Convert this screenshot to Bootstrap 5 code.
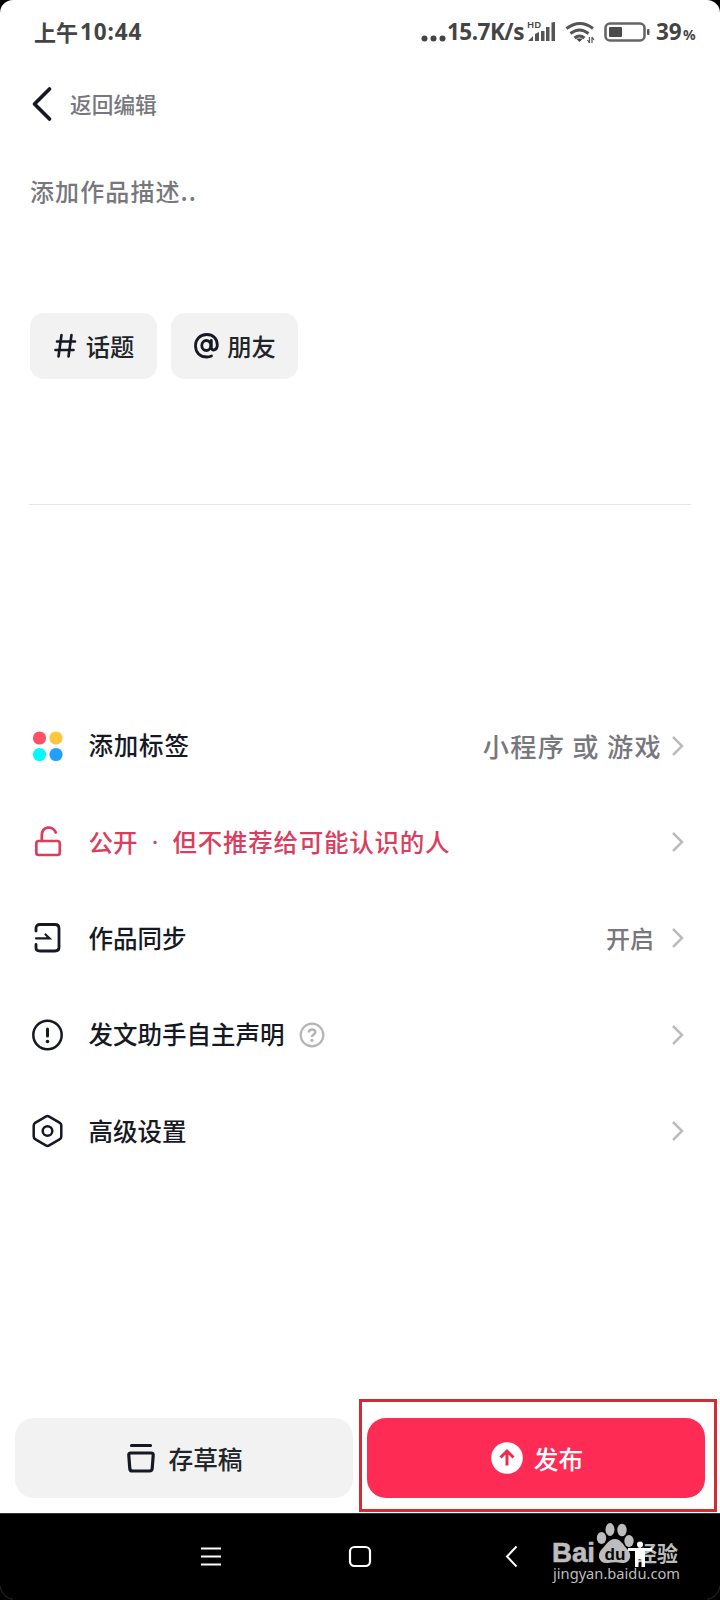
<!DOCTYPE html>
<html lang="zh-CN">
<head>
<meta charset="utf-8">
<meta name="viewport" content="width=device-width, initial-scale=1">
<title>发布</title>
<link href="https://cdn.jsdelivr.net/npm/bootstrap@5.3.0/dist/css/bootstrap.min.css" rel="stylesheet">
<style>
  html { background: #000; }
  body { background: #000; font-family: "Noto Sans CJK SC", sans-serif; line-height: 1; color: #161823; font-weight: 500; overflow: hidden; }
  svg { display: block; flex: none; overflow: visible; }
  .phone { width: 720px; height: 1600px; }
  .screen { height: 1513px; background: #fff; border-radius: 13px 13px 0 0; white-space: nowrap; }
  .status { height: 65px; padding: 0 26px 0 34px; color: #444; font-weight: 700; font-size: 22px; }
  .status .clock-cjk { padding-bottom: 4px; }
  .latin { font-family: "Noto Sans", sans-serif; font-size: 22.5px; }
  .clock { margin-left: 2px; letter-spacing: .9px; }
  .rate { width: 78px; letter-spacing: -.5px; }
  .pct { font-size: 14px; width: 11px; padding-top: 5px; letter-spacing: -1px; }
  .back-row { height: 78px; padding-left: 31px; gap: 19px; color: #77777d; font-size: 21.7px; }
  .desc { height: 95px; padding-left: 30px; color: #77777d; font-size: 24px; letter-spacing: 1.1px; }
  .chips { padding: 75px 0 0 29.5px; gap: 14px; }
  .chip { width: 127px; height: 66px; border-radius: 14px; background: #f2f2f2; font-size: 24.3px; gap: 10px; --bs-btn-padding-x: 0; border: 0; font-weight: 500; line-height: 1; padding-left: 2px; }
  .divider { margin: 125px 29px 0; height: 1px; background: #e6e6e8; }
  .options { margin-top: 193px; }
  .option { height: 96.2px; padding: 0 36px 0 31px; font-size: 24.5px; }
  .option .glyph { width: 32px; margin-right: 25.5px; }
  .value { color: #77777d; }
  .lock { color: #da3d5e; }
  .lock .latin { width: 35px; }
  .actions { padding: 0 15px; margin-top: 239px; gap: 14px; }
  .action { height: 80px; border-radius: 19px; font-size: 24.7px; font-weight: 500; border: 0; background: #f2f2f2; line-height: 1; gap: 13px; --bs-btn-padding-x: 0; --bs-btn-padding-y: 0; padding-left: 2px; }
  .action.publish { background: #fe2c55; color: #fff; gap: 11px; }
  .focus-frame { left: -8px; top: -19px; width: 358px; height: 113px; border: 3px solid #d12b35; pointer-events: none; }
  .sysnav { height: 87px; background: #000; }
  .sysnav > svg { position: absolute; left: 0; top: 0; }
  .sysnav > .wm { left: 553px; top: 8px; }
</style>
</head>
<body>
<div class="phone position-relative">
  <main class="screen d-flex flex-column">
    <header class="status d-flex align-items-center">
      <span class="clock-cjk">上午</span><span class="latin clock">10:44</span>
      <span class="ms-auto d-flex align-items-center">
        <svg width="27" height="65"><g fill="#444"><circle cx="4.500" cy="38.500" r="3"/><circle cx="13.500" cy="38.500" r="3"/><circle cx="22.500" cy="38.500" r="3"/></g></svg>
        <span class="latin rate">15.7K/s</span>
        <svg width="122" height="65" viewBox="526 0 122 65"><g fill="#555"><path d="M529 41l5-5v5zM536 34l4-2v9h-4zM542 31h3.500v10H542zM547 27h3.500v14H547zM552.500 22.500l3.500-.5v19h-3.500z"/></g>
          <text x="528" y="28" font-size="9.500" font-weight="600" fill="#444" font-family="Noto Sans">HD</text>
          <g fill="none" stroke="#555" stroke-width="3"><path d="M567.500 28.500q13.500-10 26.500 0M571.500 33.500q9-7 18 0M575.500 38q5-4 10 0"/><rect x="606.500" y="23.500" width="39" height="17" rx="4.500" stroke="#666" stroke-width="2.600"/></g>
          <path d="M577 38.500h7l-3.500 3.500z" fill="#444"/><path d="M590.500 37v6M593 43v-6M588.500 40l2 3M595 40l-2-3" stroke="#555" stroke-width="1.200" fill="none"/>
          <rect x="610" y="27" width="13" height="10" rx="1" fill="#4c4c4c"/><rect x="648" y="29" width="2.500" height="6" rx="1" fill="#555"/></svg>
        <span class="latin" style="margin-left:9px;width:27px">39</span><span class="latin pct">%</span>
      </span>
    </header>

    <div class="back-row d-flex align-items-center">
      <svg width="20" height="34" fill="none" stroke="#161823" stroke-width="3.700" stroke-linecap="round" stroke-linejoin="round"><path d="M18.500 2L3.500 17l15 15"/></svg>
      <span>返回编辑</span>
    </div>
    <div class="desc d-flex align-items-center">添加作品描述..</div>

    <div class="chips d-flex">
      <button class="btn chip d-flex align-items-center justify-content-center">
        <svg width="22" height="24" fill="none" stroke="#161823" stroke-width="2.600" stroke-linecap="round"><path d="M7.500 1L4.500 22.500M17.500 1l-3 21.500M3 7.500h18M1.500 16h18"/></svg><span>话题</span>
      </button>
      <button class="btn chip d-flex align-items-center justify-content-center" style="gap:8px">
        <svg width="25" height="26" fill="none" stroke="#161823" stroke-width="2.800" stroke-linecap="round"><ellipse cx="12.300" cy="12.500" rx="4.500" ry="5"/><path d="M17.300 7.500v7c0 3.800 6 3.500 6-2.500 0-6.500-4.500-10.500-10.500-10.500C6 1.500 1.500 6.500 1.500 12.700 1.500 19.500 6 24 13 24q2.500 0 4.500-1"/></svg><span>朋友</span>
      </button>
    </div>
    <div class="divider"></div>

    <section class="options">
      <div class="option d-flex align-items-center">
        <svg class="glyph" width="32" height="32"><circle cx="8.500" cy="8" r="6.600" fill="#fb5066"/><circle cx="25" cy="8" r="6.600" fill="#ffc53d"/><circle cx="8.500" cy="24.500" r="6.600" fill="#00fbff"/><circle cx="25" cy="24.500" r="6.600" fill="#20a0ff"/></svg>
        <span style="letter-spacing:.8px;padding-bottom:2px">添加标签</span>
        <span class="value ms-auto" style="font-size:26.2px;letter-spacing:1.3px;margin-right:10px;padding-top:1px">小程序 或 游戏</span>
        <svg width="12" height="20" fill="none" stroke="#bcbcbf" stroke-width="2.500"><path d="M1 1l9 9-9 9"/></svg>
      </div>
      <div class="option lock d-flex align-items-center">
        <svg class="glyph" width="32" height="32" fill="none" stroke="currentColor" stroke-width="2.700" stroke-linecap="round"><rect x="5.300" y="15" width="23.500" height="14" rx="2.500"/><path d="M10.800 15V9.500c0-10 11.500-10 14-3"/></svg>
        <span>公开</span><span class="latin text-center">·</span><span style="letter-spacing:.75px">但不推荐给可能认识的人</span>
        <svg class="ms-auto" width="12" height="20" fill="none" stroke="#bcbcbf" stroke-width="2.500"><path d="M1 1l9 9-9 9"/></svg>
      </div>
      <div class="option d-flex align-items-center">
        <svg class="glyph" width="32" height="32" fill="none" stroke="#161823" stroke-width="2.800" stroke-linecap="round"><path d="M5 9V6.500q0-4 4-4h15q4 0 4 4v19q0 3.500-4 3.500H9q-4 0-4-3.500V22.500"/><path d="M5 16.300h13.500L14.500 12.500" stroke-width="2.200"/></svg>
        <span>作品同步</span><span class="value ms-auto" style="font-size:24px;margin-right:18px">开启</span>
        <svg width="12" height="20" fill="none" stroke="#bcbcbf" stroke-width="2.500"><path d="M1 1l9 9-9 9"/></svg>
      </div>
      <div class="option d-flex align-items-center">
        <svg class="glyph" width="32" height="32" fill="none" stroke="#161823" stroke-width="2.500" stroke-linecap="round"><circle cx="16.500" cy="16" r="14.200"/><path d="M16.500 10v7" stroke-width="3"/><circle cx="16.500" cy="22.500" r="1.800" fill="#161823" stroke="none"/></svg>
        <span>发文助手自主声明</span>
        <svg style="margin-left:14px" width="26" height="26" fill="none" stroke="#b5b5b8" stroke-width="2.200"><circle cx="13" cy="13" r="11.300"/><path d="M9.800 10.500c.3-4.200 6.700-3.800 6.500-.3-.1 2.300-3.300 2.300-3.300 4.800" stroke-width="2.600"/><circle cx="13" cy="18.300" r="1.600" fill="#b5b5b8" stroke="none"/></svg>
        <svg class="ms-auto" width="12" height="20" fill="none" stroke="#bcbcbf" stroke-width="2.500"><path d="M1 1l9 9-9 9"/></svg>
      </div>
      <div class="option d-flex align-items-center">
        <svg class="glyph" width="32" height="32" fill="none" stroke="#161823" stroke-width="2.500" stroke-linejoin="round"><path d="M14.800 1.600q1.700-1 3.400 0l10.300 6q1.800 1 1.800 3v10.800q0 2-1.800 3l-10.300 6q-1.700 1-3.400 0l-10.300-6q-1.800-1-1.800-3V10.600q0-2 1.800-3z"/><circle cx="16.500" cy="16" r="4.800"/></svg>
        <span>高级设置</span>
        <svg class="ms-auto" width="12" height="20" fill="none" stroke="#bcbcbf" stroke-width="2.500"><path d="M1 1l9 9-9 9"/></svg>
      </div>
    </section>

    <div class="actions d-flex">
      <button class="btn action flex-fill w-50 d-flex align-items-center justify-content-center">
        <svg width="28" height="30" fill="none" stroke="#161823" stroke-width="3.200" stroke-linecap="round" stroke-linejoin="round"><path d="M4.500 2.500h19M4 10h20q2.500 0 2.200 2.500l-1 13q-.2 2.500-2.700 2.500h-17Q3 28 2.800 25.500l-1-13Q1.500 10 4 10z"/></svg>
        <span>存草稿</span>
      </button>
      <div class="position-relative flex-fill w-50">
        <button class="btn action publish w-100 d-flex align-items-center justify-content-center">
          <svg width="32" height="32"><circle cx="16" cy="16" r="15.800" fill="#fff"/><path d="M16 23.500V9.500M9.500 15.500L16 9l6.500 6.500" fill="none" stroke="#e92c50" stroke-width="3"/></svg>
          <span>发布</span>
        </button>
        <div class="focus-frame position-absolute"></div>
      </div>
    </div>
  </main>

  <nav class="sysnav position-relative">
    <svg width="720" height="87" viewBox="0 1513 720 87" fill="none" stroke="#fff">
      <path d="M0 1513.500h720" stroke="#333"/>
      <path d="M201 1548.500h20M201 1556.500h20M201 1564.500h20" stroke-width="2"/>
      <rect x="350" y="1547" width="20" height="19" rx="4.500" stroke-width="2.200"/>
      <path d="M516.500 1546.500l-9.500 10 9.500 10" stroke-width="2"/>
      <path d="M0 1586q2 11 13 13.500M720 1586q-2 11-13 13.500" stroke="#292929"/>
    </svg>
    <svg class="wm" viewBox="553 1521 130 75" width="130" height="75">
      <g fill="#bdbdbd">
        <text x="552" y="1562" font-family="Liberation Sans" font-weight="700" font-size="28" textLength="43" lengthAdjust="spacingAndGlyphs" stroke="#bdbdbd" stroke-width=".6">Bai</text>
        <ellipse cx="601.500" cy="1538" rx="4.700" ry="6"/><ellipse cx="610" cy="1529.500" rx="4.500" ry="6.500"/><ellipse cx="622" cy="1530" rx="4.700" ry="6.300"/><ellipse cx="629" cy="1541" rx="4.700" ry="6"/>
        <path d="M615 1539c6 0 8 6 13 11 5 6 1 14-6 13-5-1-9-1-14 0-9 1-12-8-6-14 4-4 7-10 13-10z"/>
        <text x="636" y="1561" font-family="Noto Sans CJK SC" font-weight="700" font-size="21" textLength="42">经验</text>
        <text x="553" y="1579" font-family="Noto Sans" font-weight="400" font-size="15" textLength="127" lengthAdjust="spacingAndGlyphs">jingyan.baidu.com</text>
      </g>
      <text x="604.500" y="1559.500" fill="#080808" font-family="Liberation Sans" font-weight="700" font-size="17" textLength="21" lengthAdjust="spacingAndGlyphs">du</text>
      <g fill="#fff"><circle cx="640" cy="1544.500" r="3"/><path d="M628 1548h24v3h-7v16h-3.500v-8h-3v8H635v-16h-7z"/></g>
    </svg>
  </nav>
</div>
<script src="https://cdn.jsdelivr.net/npm/bootstrap@5.3.0/dist/js/bootstrap.bundle.min.js"></script>
</body>
</html>
